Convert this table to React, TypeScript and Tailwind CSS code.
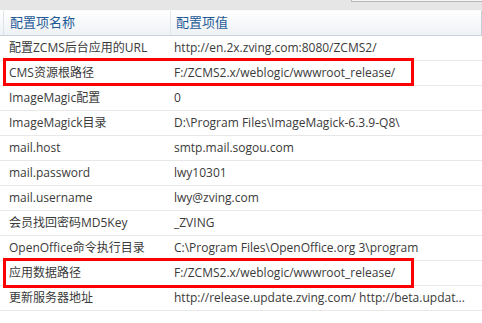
const rows: { name: string; value: string; marked?: boolean }[] = [
  { name: '配置ZCMS后台应用的URL', value: 'http://en.2x.zving.com:8080/ZCMS2/' },
  { name: 'CMS资源根路径', value: 'F:/ZCMS2.x/weblogic/wwwroot_release/', marked: true },
  { name: 'ImageMagic配置', value: '0' },
  { name: 'ImageMagick目录', value: 'D:\\Program Files\\ImageMagick-6.3.9-Q8\\' },
  { name: 'mail.host', value: 'smtp.mail.sogou.com' },
  { name: 'mail.password', value: 'lwy10301' },
  { name: 'mail.username', value: 'lwy@zving.com' },
  { name: '会员找回密码MD5Key', value: '_ZVING' },
  { name: 'OpenOffice命令执行目录', value: 'C:\\Program Files\\OpenOffice.org 3\\program' },
  { name: '应用数据路径', value: 'F:/ZCMS2.x/weblogic/wwwroot_release/', marked: true },
  { name: '更新服务器地址', value: 'http://release.update.zving.com/  http://beta.updat...' },
];

export default function App() {
  return (
    <div
      className="relative w-[482px] h-[323px] overflow-hidden bg-white text-[12px] text-[#3a3a3a]"
      style={{ fontFamily: '"Open Sans", "Noto Sans CJK SC", sans-serif' }}
    >
      {/* toolbar strip */}
      <div className="h-[10px] bg-[#e6e6e6] flex justify-end">
        <div className="w-[131px] h-[2px] bg-[#f4f4f4] border-l border-b border-[#b8b8b8]" />
      </div>

      {/* column header */}
      <div className="h-[26px] flex border-t border-[#fafafa] border-b border-b-[#c9d1dc] border-r border-r-[#c5cdd8] bg-gradient-to-b from-white to-[#eef1f5] text-[13px] text-[#1f5a96]">
        <div className="w-[168px] flex items-center pl-[9px] border-l border-l-[#dde3ea] border-r border-r-[#e2e7ee] ml-[3px]">
          <span className="-ml-[3px]">配置项名称</span>
        </div>
        <div className="flex-1 flex items-center pl-[5px]">配置项值</div>
      </div>

      {/* rows */}
      {rows.map((r) => (
        <div key={r.name} className="h-[25px] flex items-center border-b border-[#e8e8e8] whitespace-nowrap">
          <div className="w-[174px] pl-[9px]">{r.name}</div>
          <div className="flex-1">{r.value}</div>
        </div>
      ))}

      {/* highlight frames */}
      <div className="absolute left-[3px] top-[58px] w-[411px] h-[28px] border-[3px] border-[#ff0000]" />
      <div className="absolute left-[3px] top-[258px] w-[411px] h-[30px] border-[3px] border-[#ff0000]" />
    </div>
  );
}
